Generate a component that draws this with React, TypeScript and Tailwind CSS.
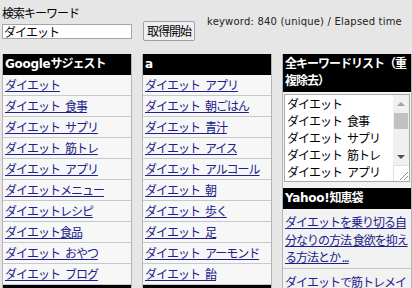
import type { ReactNode } from "react";

const google = [
  "ダイエット",
  "ダイエット\u2002食事",
  "ダイエット\u2002サプリ",
  "ダイエット\u2002筋トレ",
  "ダイエット\u2002アプリ",
  "ダイエットメニュー",
  "ダイエットレシピ",
  "ダイエット食品",
  "ダイエット\u2002おやつ",
  "ダイエット\u2002ブログ",
];

const letterA = [
  "ダイエット\u2002アプリ",
  "ダイエット\u2002朝ごはん",
  "ダイエット\u2002青汁",
  "ダイエット\u2002アイス",
  "ダイエット\u2002アルコール",
  "ダイエット\u2002朝",
  "ダイエット\u2002歩く",
  "ダイエット\u2002足",
  "ダイエット\u2002アーモンド",
  "ダイエット\u2002飴",
];

const allKeywords = [
  "ダイエット",
  "ダイエット\u2002食事",
  "ダイエット\u2002サプリ",
  "ダイエット\u2002筋トレ",
  "ダイエット\u2002アプリ",
];

const yahoo = [
  "ダイエットを乗り切る自分なりの方法 食欲を抑える方法とか ...",
  "ダイエットで筋トレメイン、有酸素運動メインどちらがいいですか",
];

const jp = "font-['Noto_Sans_CJK_JP',sans-serif] tracking-[-1px]";

function Header({ children }: { children: ReactNode }) {
  return (
    <div className="bg-black px-[2px] py-[2px] font-['DejaVu_Sans','Noto_Sans_CJK_JP',sans-serif] text-[12px] leading-[17px] font-bold tracking-[-1px] text-white">
      {children}
    </div>
  );
}

function Column({ title, items }: { title: ReactNode; items: string[] }) {
  return (
    <div className="w-[130px] shrink-0 border-x border-[#b4b4b4] bg-[#f7f7f7]">
      <Header>{title}</Header>
      <ul className={jp}>
        {items.map((item, i) => (
          <li key={i} className="h-[21px] border-b border-[#c8c8c8] px-[2px] text-[12px] leading-[20px] whitespace-nowrap overflow-hidden">
            <a href="#" className="text-[#20208a] underline">
              {item}
            </a>
          </li>
        ))}
      </ul>
      {/* next section header, cut off by the window */}
      <div className="h-[21px] bg-black" />
    </div>
  );
}

export default function App() {
  return (
    <div className="h-[288px] w-[412px] overflow-hidden bg-[#e6e6e6] pl-[2px]">
      {/* Search form */}
      <div className="flex h-[54px] items-start">
        <div className="w-[130px] pt-[6px]">
          <div className={`${jp} text-[12px] leading-[14px] text-black`}>検索キーワード</div>
          <div className={`${jp} mt-[4px] h-[15px] border border-[#a5a5a5] bg-white px-[1px] text-[12px] leading-[13px] text-black`}>
            ダイエット
          </div>
        </div>
        <button className={`${jp} mt-[21px] ml-[11px] h-[20px] w-[52px] rounded-[2px] border border-[#a0a0a0] bg-[#efefef] text-[12px] leading-[18px] text-black`}>
          取得開始
        </button>
        <div className="mt-[16px] ml-[12px] whitespace-nowrap font-['DejaVu_Sans',sans-serif] text-[10px] leading-[12px] tracking-[0.2px] text-[#222]">
          keyword: 840 (unique) / Elapsed time
        </div>
      </div>

      {/* Result columns */}
      <div className="flex gap-[10px]">
        <Column title={<span className="tracking-[-0.3px]">Google<span className="tracking-[-1px]">サジェスト</span></span>} items={google} />
        <Column title="a" items={letterA} />

        <div className="w-[130px] shrink-0 border-x border-[#b4b4b4] bg-[#f2f2f2]">
          <Header>全キーワードリスト（重複除去）</Header>
          <div className="px-[1px] pt-[2px] pb-[6px]">
            <div className="flex h-[88px] border border-[#a9a9a9] bg-white">
              <div className={`${jp} flex-1 overflow-hidden pl-[2px] text-[12px] leading-[17px] text-black`}>
                {allKeywords.map((k, i) => (
                  <div key={i} className="whitespace-nowrap">
                    {k}
                  </div>
                ))}
              </div>
              <div className="flex w-[16px] flex-col bg-[#f0f0f0]">
                <div className="flex h-[16px] items-center justify-center">
                  <svg width="8" height="5" viewBox="0 0 8 5">
                    <path d="M0 5 L4 1 L8 5 Z" fill="#a3a3a3" />
                  </svg>
                </div>
                <div className="h-[38px] px-[1px] pt-[2px]">
                  <div className="h-[16px] bg-[#c1c1c1]" />
                </div>
                <div className="flex h-[16px] items-center justify-center">
                  <svg width="8" height="5" viewBox="0 0 8 5">
                    <path d="M0 0 L8 0 L4 4 Z" fill="#505050" />
                  </svg>
                </div>
                <div className="flex h-[16px] items-end justify-end border-t border-l border-[#e0e0e0] bg-white p-[1px]">
                  <svg width="10" height="10" viewBox="0 0 10 10">
                    <path d="M2 10 L10 2 M6 10 L10 6" stroke="#8a8a8a" strokeWidth="1" />
                  </svg>
                </div>
              </div>
            </div>
          </div>
          <Header>
            <span className="tracking-[-0.3px]">Yahoo!</span>知恵袋
          </Header>
          <ul className={jp}>
            {yahoo.map((q, i) => (
              <li key={i} className="border-b border-[#c8c8c8] px-[2px] pt-[4px] pb-[2px] text-[12px] leading-[17.5px]">
                <a href="#" className="text-[#20208a] underline">
                  {q}
                </a>
              </li>
            ))}
          </ul>
        </div>
      </div>
    </div>
  );
}
